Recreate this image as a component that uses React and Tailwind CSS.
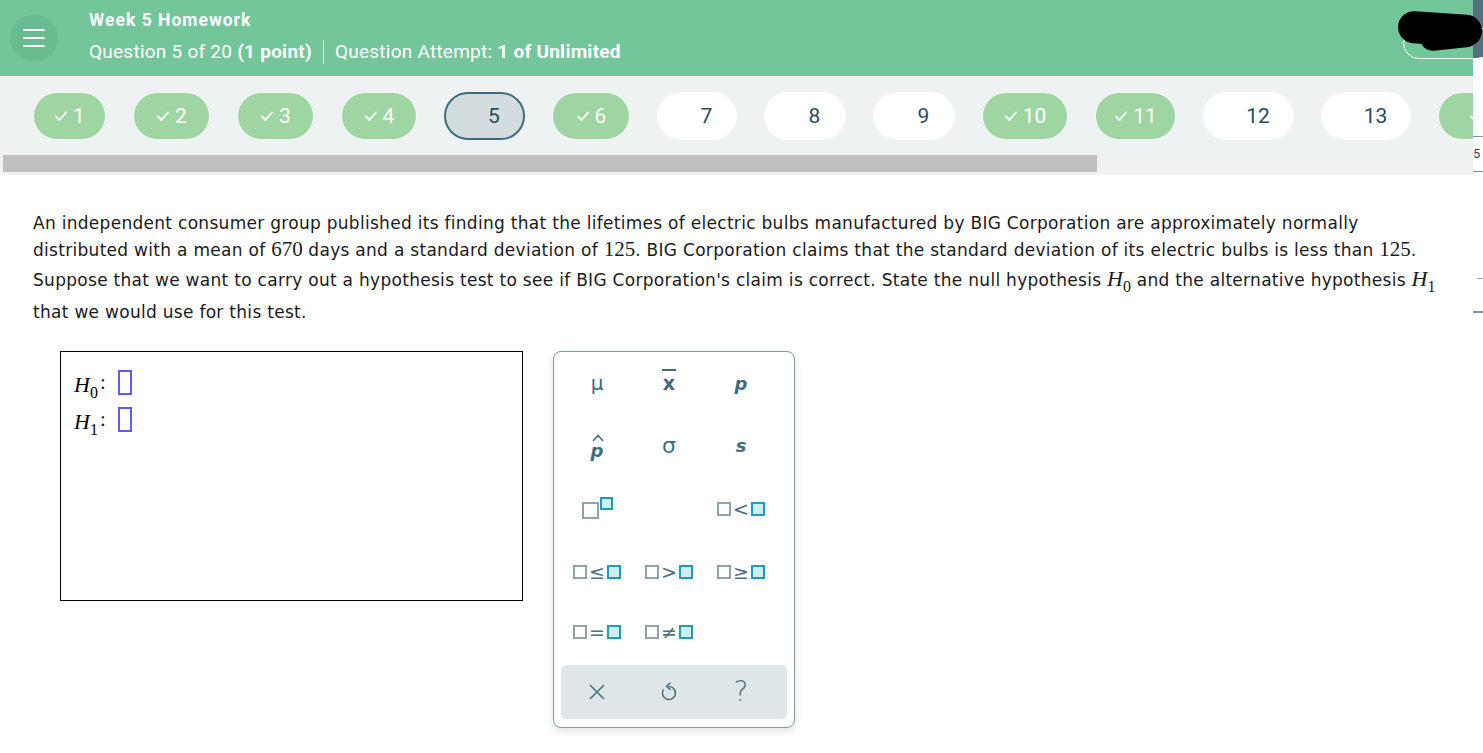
import React from 'react';

const pills = [
  { n: '1', done: true, w: 'w-[73px]' },
  { n: '2', done: true, w: 'w-[77px]' },
  { n: '3', done: true, w: 'w-[77px]' },
  { n: '4', done: true, w: 'w-[76px]' },
  { n: '5', current: true, w: 'w-[81px]' },
  { n: '6', done: true, w: 'w-[78px]' },
  { n: '7', w: 'w-[80px]' },
  { n: '8', w: 'w-[82px]' },
  { n: '9', w: 'w-[82px]' },
  { n: '10', done: true, w: 'w-[86px]' },
  { n: '11', done: true, w: 'w-[81px]' },
  { n: '12', w: 'w-[91px]' },
  { n: '13', w: 'w-[90px]' },
  { n: '', done: true, w: 'w-[80px]' },
];

const Check = ({ hidden }) => (
  <svg width="14" height="14" viewBox="0 0 14 14" className={hidden ? 'invisible' : ''}>
    <path d="M2 7.5 L5.5 11 L12 3.5" fill="none" stroke="white" strokeWidth="1.8" strokeLinecap="round" strokeLinejoin="round" />
  </svg>
);

const Pill = ({ p }) => {
  let cls = 'bg-white border border-white text-[#284d5c]';
  if (p.done) cls = 'bg-[#9fd4a3] border border-[#f6fbf7] text-white';
  if (p.current) cls = 'bg-[#d3dde0] border-2 border-[#3e6b7d] text-[#284d5c]';
  return (
    <div className={`shrink-0 h-[48px] rounded-full flex items-center justify-center gap-[5px] ${p.w} ${cls}`}>
      <Check hidden={!p.done} />
      <span className="text-[21px] leading-none">{p.n}</span>
    </div>
  );
};

const Box = ({ teal, size = 'w-[14px] h-[14px]' }) => (
  <span
    className={`inline-block ${size} border-2 ${
      teal ? 'border-[#1a9fb8] bg-[#cdeef3]' : 'border-[#8ea3ab] bg-white'
    }`}
  />
);

const Rel = ({ sym }) => (
  <div className="flex items-center gap-[2px] text-[#4a7080] text-[19px] leading-none font-['DejaVu_Sans',sans-serif]">
    <Box />
    <span>{sym}</span>
    <Box teal />
  </div>
);

const Serif = ({ children }) => (
  <span className="font-['Liberation_Serif',serif] text-[21px] tracking-normal">{children}</span>
);

const HSym = ({ sub }) => (
  <span className="font-['Liberation_Serif',serif] text-[22px] tracking-normal">
    <i>H</i>
    <span className="text-[16px] relative top-[6px]">{sub}</span>
  </span>
);

const Cell = ({ h = 'h-[62px]', children }) => (
  <div className={`${h} flex items-center justify-center`}>{children}</div>
);

export default function App() {
  return (
    <div className="relative w-[1483px] h-[753px] overflow-hidden bg-white flex font-['Roboto',sans-serif]">
      <div className="w-[1473px] shrink-0 flex flex-col">
        {/* header */}
        <div className="h-[76px] bg-[#72c69a] flex items-center pl-[10px]">
          <div className="w-[48px] h-[46px] rounded-full bg-[#69bc90] flex flex-col items-center justify-center gap-[6px]">
            <span className="block w-[22px] h-[2px] bg-white rounded" />
            <span className="block w-[22px] h-[2px] bg-white rounded" />
            <span className="block w-[22px] h-[2px] bg-white rounded" />
          </div>
          <div className="ml-[31px] text-white">
            <div className="text-[17.5px] font-bold leading-none tracking-[1px]">Week 5 Homework</div>
            <div className="flex items-center mt-[10px] text-[19px] leading-none tracking-[0.25px]">
              <span>
                Question 5 of 20 <b>(1 point)</b>
              </span>
              <span className="mx-[11px] w-px h-[24px] bg-white" />
              <span>
                Question Attempt: <b>1 of Unlimited</b>
              </span>
            </div>
          </div>
        </div>

        {/* question nav */}
        <div className="h-[99px] bg-[#eff2f3] pt-[16px]">
          <div className="flex gap-[27px] pl-[33px] overflow-hidden">
            {pills.map((p, i) => (
              <Pill key={i} p={p} />
            ))}
          </div>
          <div className="ml-[3px] mt-[15px] w-[1094px] h-[17px] bg-[#bfbfbf]" />
        </div>

        {/* question */}
        <div className="pl-[33px] pt-[35px] text-[17px] tracking-[0.29px] text-[#1a1a1a] font-['DejaVu_Sans','Verdana',sans-serif] whitespace-nowrap">
          <div className="h-[26px] leading-[26px]">
            An independent consumer group published its finding that the lifetimes of electric bulbs manufactured by BIG Corporation are approximately normally
          </div>
          <div className="h-[26px] leading-[26px]">
            distributed with a mean of <Serif>670</Serif> days and a standard deviation of <Serif>125</Serif>. BIG Corporation claims that the standard deviation of its electric bulbs is less than <Serif>125</Serif>.
          </div>
          <div className="h-[37px] leading-[34px]">
            Suppose that we want to carry out a hypothesis test to see if BIG Corporation's claim is correct. State the null hypothesis <HSym sub="0" /> and the alternative hypothesis <HSym sub="1" />
          </div>
          <div className="h-[26px] leading-[26px]">that we would use for this test.</div>
        </div>

        <div className="flex items-start mt-[26px] ml-[60px]">
          {/* answer box */}
          <div className="w-[463px] h-[250px] border border-black pl-[13px] pt-[14px]">
            {['0', '1'].map((s) => (
              <div key={s} className="flex items-center h-[37px]">
                <HSym sub={s} />
                <span className="font-['Liberation_Serif',serif] text-[21px] text-[#3a0a0a] ml-[2px] mr-[12px] -mt-[4px]">:</span>
                <span className="inline-block w-[14px] h-[25px] border-2 border-[#5b5bf5] -mt-[4px]" />
              </div>
            ))}
          </div>

          {/* palette */}
          <div className="ml-[30px] w-[242px] h-[377px] border border-[#7f9ba6] rounded-[8px] shadow-[0_3px_8px_rgba(0,0,0,0.12)] bg-white pl-[7px] pr-[7px] flex flex-col">
            <div className="grid grid-cols-[72px_72px_72px] text-[#3f6b7d]">
              <Cell>
                <span className="text-[20px] font-['DejaVu_Sans',sans-serif]">μ</span>
              </Cell>
              <Cell>
                <span className="relative text-[19px] font-bold leading-none font-['DejaVu_Sans',sans-serif]">
                  <span className="absolute left-[-1px] right-[-1px] top-[-5px] h-[2px] bg-[#3f6b7d]" />x
                </span>
              </Cell>
              <Cell>
                <span className="text-[18px] italic font-bold font-['DejaVu_Sans',sans-serif]">p</span>
              </Cell>

              <Cell>
                <div className="flex flex-col items-center mt-[4px]">
                  <svg width="12" height="8" viewBox="0 0 12 8" className="ml-[2px]">
                    <path d="M1 7 L6 1.5 L11 7" fill="none" stroke="#3f6b7d" strokeWidth="1.6" />
                  </svg>
                  <span className="text-[18px] italic font-bold leading-[18px] font-['DejaVu_Sans',sans-serif]">p</span>
                </div>
              </Cell>
              <Cell>
                <span className="text-[22px] font-['DejaVu_Sans',sans-serif]">σ</span>
              </Cell>
              <Cell>
                <span className="text-[18px] italic font-bold font-['DejaVu_Sans',sans-serif]">s</span>
              </Cell>

              <Cell h="h-[66px]">
                <div className="flex items-start">
                  <span className="mt-[9px]"><Box size="w-[17px] h-[17px]" /></span>
                  <span className="ml-[1px]"><Box size="w-[13px] h-[13px]" teal /></span>
                </div>
              </Cell>
              <div className="h-[66px]" />
              <Cell h="h-[66px]"><Rel sym="<" /></Cell>

              <Cell h="h-[60px]"><Rel sym="≤" /></Cell>
              <Cell h="h-[60px]"><Rel sym=">" /></Cell>
              <Cell h="h-[60px]"><Rel sym="≥" /></Cell>

              <Cell h="h-[60px]"><Rel sym="=" /></Cell>
              <Cell h="h-[60px]"><Rel sym="≠" /></Cell>
              <div className="h-[60px]" />
            </div>
            <div className="mt-[3px] h-[54px] w-[226px] rounded-[5px] bg-[#dfe6e8] grid grid-cols-[72px_72px_72px]">
              <div className="flex items-center justify-center">
                <svg width="18" height="18" viewBox="0 0 18 18">
                  <path d="M2 2 L16 16 M16 2 L2 16" stroke="#4a7080" strokeWidth="1.6" />
                </svg>
              </div>
              <div className="flex items-center justify-center">
                <svg width="18" height="20" viewBox="0 0 18 20">
                  <path d="M9 4.5 A6.5 6.5 0 1 1 3.2 8" fill="none" stroke="#4a7080" strokeWidth="1.6" strokeLinecap="round" />
                  <path d="M10 1 L6.5 4.5 L10 7.5" fill="none" stroke="#4a7080" strokeWidth="1.6" strokeLinecap="round" strokeLinejoin="round" />
                </svg>
              </div>
              <div className="flex items-center justify-center text-[28px] font-light text-[#4a7080] font-['DejaVu_Sans',sans-serif]">?</div>
            </div>
          </div>
        </div>
      </div>

      {/* right edge strip */}
      <div className="w-[10px] shrink-0 flex flex-col">
        <div className="h-[58px] bg-[#52707e]" />
        <div className="h-[78px]" />
        <div className="h-px bg-[#7e97a2]" />
        <div className="h-[34px] text-[13px] leading-[34px] text-[#2b4d5c]">5</div>
        <div className="h-px bg-[#7e97a2]" />
        <div className="h-[106px]" />
        <div className="h-px bg-[#9aa9b0] w-[6px] ml-[4px]" />
        <div className="h-[32px]" />
        <div className="h-[2px] bg-[#7e97a2]" />
      </div>

      {/* redacted avatar */}
      <div className="absolute left-[1403px] top-[27px] w-[90px] h-[32px] rounded-full border border-white" />
      <div className="absolute left-[1398px] top-[13px] w-[84px] h-[32px] rounded-full bg-black rotate-[4deg]" />
      <div className="absolute left-[1420px] top-[24px] w-[58px] h-[25px] rounded-full bg-black -rotate-[6deg]" />
    </div>
  );
}
